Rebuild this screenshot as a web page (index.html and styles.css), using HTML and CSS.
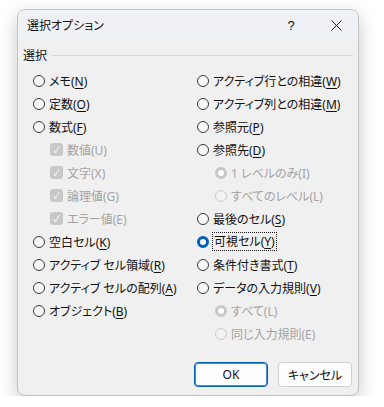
FILE: index.html
```html
<!DOCTYPE html>
<html lang="ja">

<head>
    <meta charset="UTF-8">
    <meta name="viewport" content="width=device-width, initial-scale=1.0">
    <title>選択オプション</title>
    <link rel="stylesheet" href="styles.css">
</head>

<body>
    <div class="dialog">
        <div class="titlebar">
            <span class="title">選択オプション</span>
            <span class="help">?</span>
            <span class="close">
                <svg width="11" height="11" viewBox="0 0 11 11">
                    <path d="M0.5 0.5 L10.5 10.5 M10.5 0.5 L0.5 10.5" stroke="#1a1a1a" stroke-width="1" fill="none"/>
                </svg>
            </span>
        </div>

        <div class="content">
            <div class="group-head">
                <span>選択</span>
                <span class="rule"></span>
            </div>

            <div class="columns">
                <div class="col">
                    <div class="row"><span class="radio"></span><span>メモ(<u>N</u>)</span></div>
                    <div class="row"><span class="radio"></span><span>定数(<u>O</u>)</span></div>
                    <div class="row"><span class="radio"></span><span>数式(<u>F</u>)</span></div>
                    <div class="row sub disabled"><span class="check">&#10003;</span><span>数値(U)</span></div>
                    <div class="row sub disabled"><span class="check">&#10003;</span><span>文字(X)</span></div>
                    <div class="row sub disabled"><span class="check">&#10003;</span><span>論理値(G)</span></div>
                    <div class="row sub disabled"><span class="check">&#10003;</span><span>エラー値(E)</span></div>
                    <div class="row"><span class="radio"></span><span>空白セル(<u>K</u>)</span></div>
                    <div class="row"><span class="radio"></span><span>アクティブ セル領域(<u>R</u>)</span></div>
                    <div class="row"><span class="radio"></span><span>アクティブ セルの配列(<u>A</u>)</span></div>
                    <div class="row"><span class="radio"></span><span>オブジェクト(<u>B</u>)</span></div>
                </div>

                <div class="col">
                    <div class="row"><span class="radio"></span><span>アクティブ行との相違(<u>W</u>)</span></div>
                    <div class="row"><span class="radio"></span><span>アクティブ列との相違(<u>M</u>)</span></div>
                    <div class="row"><span class="radio"></span><span>参照元(<u>P</u>)</span></div>
                    <div class="row"><span class="radio"></span><span>参照先(<u>D</u>)</span></div>
                    <div class="row sub disabled"><span class="radio on"></span><span>1 レベルのみ(I)</span></div>
                    <div class="row sub disabled"><span class="radio"></span><span>すべてのレベル(L)</span></div>
                    <div class="row"><span class="radio"></span><span>最後のセル(<u>S</u>)</span></div>
                    <div class="row"><span class="radio on"></span><span class="focus">可視セル(<u>Y</u>)</span></div>
                    <div class="row"><span class="radio"></span><span>条件付き書式(<u>T</u>)</span></div>
                    <div class="row"><span class="radio"></span><span>データの入力規則(<u>V</u>)</span></div>
                    <div class="row sub disabled"><span class="radio on"></span><span>すべて(L)</span></div>
                    <div class="row sub disabled"><span class="radio"></span><span>同じ入力規則(E)</span></div>
                </div>
            </div>

            <div class="footer">
                <button class="btn primary">OK</button>
                <button class="btn">キャンセル</button>
            </div>
        </div>
    </div>
</body>

</html>
```

FILE: styles.css
```css
body {
    margin: 0;
    padding: 0;
    background-color: #fff;
    font-family: "Noto Sans", "Noto Sans CJK JP", sans-serif;
    font-feature-settings: "palt";
    font-size: 12px;
    color: #111;
}

.dialog {
    box-sizing: border-box;
    margin: 9px 0 0 17px;
    width: 342px;
    height: 387px;
    border: 1px solid #c4c4c4;
    border-radius: 8px;
    background-color: #f0f0f0;
    box-shadow: 0 6px 18px rgba(0, 0, 0, 0.22);
    overflow: hidden;
    display: flex;
    flex-direction: column;
}

.titlebar {
    height: 30px;
    display: flex;
    align-items: center;
    background-color: #eff1f6;
    padding-left: 9px;
}

.title {
    flex: 1;
    font-size: 12px;
}

.help {
    width: 20px;
    text-align: center;
    font-family: "Liberation Sans", sans-serif;
    font-size: 13px;
    margin-right: 30px;
}

.close {
    width: 11px;
    height: 11px;
    margin-right: 16px;
    display: flex;
}

.content {
    flex: 1;
    padding: 7px 5px 0 5px;
    display: flex;
    flex-direction: column;
}

.group-head {
    height: 16px;
    display: flex;
    align-items: center;
    gap: 5px;
    font-size: 12px;
}

.rule {
    flex: 1;
    height: 1px;
    background-color: #d6d6d6;
}

.columns {
    display: grid;
    grid-template-columns: 164px 1fr;
    padding: 6px 0 0 10px;
}

.row {
    height: 23px;
    display: flex;
    align-items: center;
    gap: 4px;
    white-space: nowrap;
}

.row u {
    text-decoration-thickness: 1px;
    text-underline-offset: 2px;
}

.row.sub {
    padding-left: 17px;
}

.col:last-child .row.sub {
    padding-left: 18px;
}

.disabled {
    color: #a3a3a3;
}

.radio {
    box-sizing: border-box;
    width: 12px;
    height: 12px;
    border: 1px solid #3a3a3a;
    border-radius: 50%;
    background-color: #f7f7f7;
    flex-shrink: 0;
}

.radio.on {
    border: 3.5px solid #005fb8;
    background-color: #fff;
}

.disabled .radio {
    border-color: #c9c9c9;
    background-color: #f3f3f3;
}

.disabled .radio.on {
    border: 3.5px solid #c7c7c7;
    background-color: #fff;
}

.check {
    width: 13px;
    height: 13px;
    border-radius: 3px;
    background-color: #c8c8c8;
    color: #fff;
    font-size: 9px;
    line-height: 13px;
    text-align: center;
    flex-shrink: 0;
}

.focus {
    outline: 1px dotted #1a1a1a;
    outline-offset: 0;
    padding: 0 1px;
    line-height: 17px;
}

.footer {
    display: flex;
    justify-content: flex-end;
    gap: 10px;
    padding: 17px 1px 0 0;
}

.btn {
    box-sizing: border-box;
    width: 74px;
    height: 25px;
    font-family: "Noto Sans", "Noto Sans CJK JP", sans-serif;
    font-feature-settings: "palt";
    font-size: 12px;
    color: #111;
    background-color: #fdfdfd;
    border: 1px solid #d0d0d0;
    border-radius: 4px;
    padding: 0;
}

.btn.primary {
    border: 1px solid #005fb8;
    box-shadow: inset 0 0 0 1px #4c8fd0;
}
```
